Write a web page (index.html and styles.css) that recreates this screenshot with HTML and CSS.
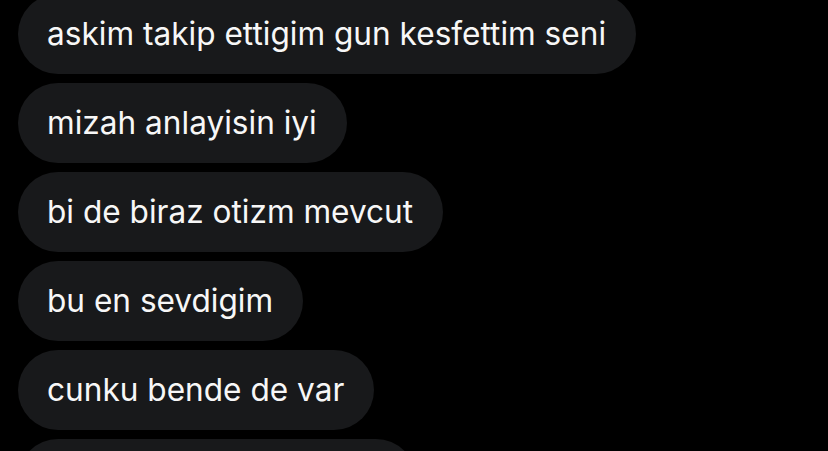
FILE: index.html
```html
<!DOCTYPE html>
<html lang="tr">
<head>
<meta charset="utf-8">
<link rel="stylesheet" href="styles.css">
</head>
<body>
<div class="chat">
  <div class="msg">askim takip ettigim gun kesfettim seni</div>
  <div class="msg">mizah anlayisin iyi</div>
  <div class="msg">bi de biraz otizm mevcut</div>
  <div class="msg">bu en sevdigim</div>
  <div class="msg">cunku bende de var</div>
  <div class="msg msg-partial"></div>
</div>
</body>
</html>
```
FILE: styles.css
```css
html, body {
  margin: 0;
  padding: 0;
  background: #000;
  overflow: hidden;
  height: 451px;
}
.chat {
  display: flex;
  flex-direction: column;
  align-items: flex-start;
  gap: 9px;
  padding-left: 18px;
  margin-top: -6px;
}
.msg {
  background: #18191b;
  color: #f7f7f7;
  font-family: Inter, "Noto Sans", sans-serif;
  font-size: 31.6px;
  line-height: 36px;
  padding: 22px 30px 22px 29px;
  border-radius: 40px;
  white-space: nowrap;
}
.msg-partial {
  width: 398px;
  height: 80px;
  padding: 0;
  box-sizing: border-box;
}
```
